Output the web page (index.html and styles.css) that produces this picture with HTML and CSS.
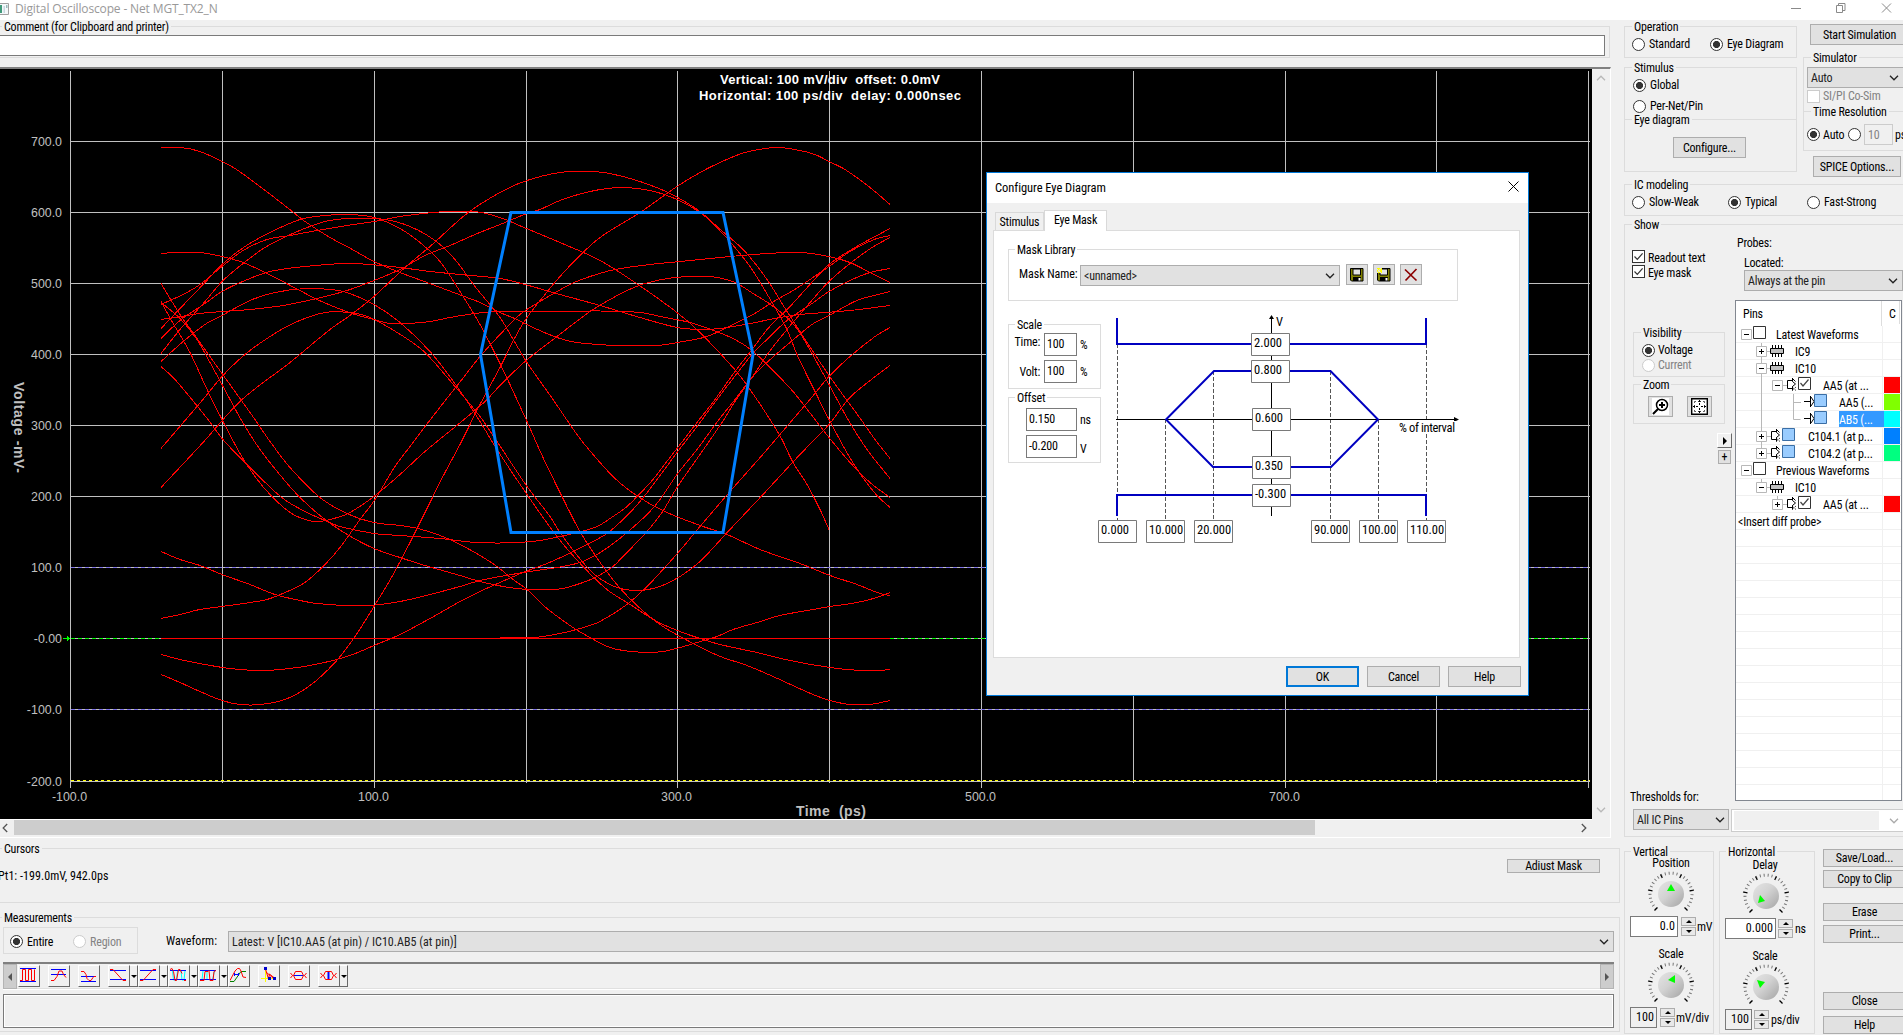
FILE: index.html
```html
<!DOCTYPE html>
<html lang="en">
<head>
<meta charset="utf-8">
<title>Digital Oscilloscope - Net MGT_TX2_N</title>
<link rel="stylesheet" href="styles.css">
</head>
<body>
<svg width="0" height="0" class="defs" aria-hidden="true">
  <symbol id="chev" viewBox="0 0 10 6"><path d="M1 .8 5 4.8 9 .8" fill="none" stroke="currentColor" stroke-width="1.3"/></symbol>
  <symbol id="tick" viewBox="0 0 11 11"><path d="M1.5 5.5 4.3 8.3 9.6 2.4" fill="none" stroke="#333" stroke-width="1.2"/></symbol>
  <symbol id="minus" viewBox="0 0 11 11"><path d="M.5.5h10v10H.5z" fill="#fff" stroke="#b8b8b8"/><path d="M3 5.5h5" stroke="#000"/></symbol>
  <symbol id="plus" viewBox="0 0 11 11"><path d="M.5.5h10v10H.5z" fill="#fff" stroke="#b8b8b8"/><path d="M3 5.5h5M5.5 3v5" stroke="#000"/></symbol>
  <symbol id="box" viewBox="0 0 13 13"><path d="M.5.5h12v12H.5z" fill="#fff" stroke="#333"/></symbol>
  <symbol id="boxon" viewBox="0 0 13 13"><path d="M.5.5h12v12H.5z" fill="#fff" stroke="#333"/><path d="M2.5 6 5 9l5.5-6.500" fill="none" stroke="#444" stroke-width="1.2"/></symbol>
  <symbol id="boxblue" viewBox="0 0 13 13"><path d="M.5.5h12v12H.5z" fill="#99ccff" stroke="#3a6ea5"/></symbol>
  <symbol id="chip" viewBox="0 0 14 12"><path d="M2.500 0v12M5.500 0v12M8.500 0v12M11.500 0v12" stroke="#000"/><path d="M.5 3.500h13v5H.5z" fill="#c0c0c0" stroke="#000"/></symbol>
  <symbol id="probe" viewBox="0 0 11 13"><path d="M7 2.500H1.500v8H6M6.500 0v3.500L9.500 6 6.500 8.500v3M6.500.5 9.500 3.500M6.500 8.500v4" fill="none" stroke="#000"/><path d="M6 9l4 3.500M6 12.500l4-3.500" stroke="#000" stroke-dasharray="1 1"/></symbol>
  <symbol id="pin" viewBox="0 0 11 13"><path d="M0 6.500h6M6.500 1v11M7 2l3 4.500-3 4.500" fill="none" stroke="#000"/></symbol>
  <symbol id="dial" viewBox="0 0 48 44">
    <path d="M9.100 38.900A21 21 0 1 1 38.900 38.900" fill="none" stroke="#777" stroke-width="3" stroke-dasharray="1 2.900"/>
    <path d="M7.500 40.500l3-3M40.500 40.500l-3-3M1 20l4.500.9M47 20l-4.500.9M13.500 4.500l1.800 3.500M34.500 4.500 32.700 8" stroke="#000" stroke-width="1.2"/>
    <circle cx="24" cy="24" r="13" fill="url(#knob)"/>
  </symbol>
  <defs>
    <linearGradient id="knob" x1="0" y1="0" x2="1" y2="1"><stop offset="0" stop-color="#e4e4e4"/><stop offset=".45" stop-color="#d2d2d2"/><stop offset="1" stop-color="#a4a4a4"/></linearGradient>
  </defs>
</svg>

<header class="titlebar">
  <svg class="appicon" viewBox="0 0 9 12"><path d="M0 .5h8.500v11H0" fill="#f4f8fa" stroke="#a0a0a0"/><path d="M0 2h2v8H0z" fill="#3f9a7a"/><path d="M3.500 3h1.500v7H3.500z" fill="#c8d8e0"/><path d="M6 2h1.500v3H6z" fill="#9bb"/></svg>
  <span class="title">Digital Oscilloscope - Net MGT_TX2_N</span>
  <svg class="winbtns" viewBox="0 0 104 12"><g fill="none" stroke="#8a8a8a"><path d="M0 6.500h10M45.500 3.500h6v7h-6zM47.500 3.500v-2h6.500v7h-2.500M91 1.500l9 9M100 1.500l-9 9"/></g></svg>
</header>

<div class="shell">
<main class="main">
  <section class="group comment"><span class="cap">Comment (for Clipboard and printer)</span><div class="field comment-input"></div></section>

  <section class="scope">
    <div class="scope-row">
      <svg class="plot" id="plot" viewBox="0 69 1592 750">
        <g class="grid">
          <path d="M70.500 71V788M222.500 71V783M374.500 71V788M526.500 71V783M677.500 71V788M829.500 71V783M981.500 71V788M1133.500 71V783M1285.500 71V788M1436.500 71V783M1588.500 71V788"/>
          <path d="M70 141.500H1590M70 212.500H1590M70 283.500H1590M70 354.500H1590M70 425.500H1590M70 496.500H1590M70 567.500H1590M70 638.500H1590M70 709.500H1590M70 781.500H1590"/>
        </g>
        <path class="blue" d="M71 567.500H1590M71 709.500H1590"/>
        <path class="green" d="M71 638.500H1590"/>
        <path class="yellow" d="M71 780.500H1590"/>
        <path d="M63 638.500h7M67.500 636v5M68.500 637v3" stroke="#00ff00" fill="none"/>
        <g id="traces" class="traces"></g>
        <path class="mask" d="M511 212.500H723L753 354.500 723 532.500H511L480.500 354.500Z"/>
        <g class="axis" text-anchor="end">
          <text x="62" y="146">700.0</text><text x="62" y="217">600.0</text><text x="62" y="288">500.0</text><text x="62" y="359">400.0</text><text x="62" y="430">300.0</text><text x="62" y="501">200.0</text><text x="62" y="572">100.0</text><text x="62" y="643">-0.00</text><text x="62" y="714">-100.0</text><text x="62" y="785.500">-200.0</text>
        </g>
        <g class="axis" text-anchor="middle">
          <text x="69.500" y="800.500">-100.0</text><text x="373.500" y="800.500">100.0</text><text x="676.500" y="800.500">300.0</text><text x="980.500" y="800.500">500.0</text><text x="1284.500" y="800.500">700.0</text>
        </g>
        <g class="bold-axis">
          <text x="796" y="815.500" textLength="70" xml:space="preserve">Time  (ps)</text>
          <text transform="translate(14 382) rotate(90)" textLength="91">Voltage -mV-</text>
        </g>
        <g class="readout">
          <text x="720" y="83.500" textLength="220" xml:space="preserve">Vertical: 100 mV/div  offset: 0.0mV</text>
          <text x="699" y="99.500" textLength="262" xml:space="preserve">Horizontal: 100 ps/div  delay: 0.000nsec</text>
        </g>
      </svg>
      <div class="vscroll"><svg class="flip"><use href="#chev"/></svg><svg><use href="#chev"/></svg></div>
    </div>
    <div class="hscroll"><svg class="arr l"><use href="#chev"/></svg><div class="thumb"></div><svg class="arr r"><use href="#chev"/></svg></div>
  </section>

  <section class="group cursors"><span class="cap">Cursors</span>
    <div class="cursor-row"><span class="pt">Pt1: -199.0mV, 942.0ps</span><span class="btn adjust">Adiust Mask</span></div>
  </section>

  <section class="group meas"><span class="cap">Measurements</span>
    <div class="meas-row">
      <div class="range"><i class="radio on"></i><span>Entire</span><i class="radio off gap"></i><span class="dim">Region</span></div>
      <span class="wf">Waveform:</span>
      <div class="select wfsel"><span>Latest: V [IC10.AA5 (at pin) / IC10.AB5 (at pin)]</span><svg><use href="#chev"/></svg></div>
    </div>
    <div class="toolbar">
      <div class="scrollend"><b class="tri-l"></b></div>
      <div class="tools">
        <span class="tool"><svg viewBox="0 0 17 17"><path class="b" d="M0 1.500h16M0 14.500h16"/><path class="r" d="M0 13.500h2.500V2.500h3v11h3V2.500h3v11h3V2.500"/></svg></span>
        <span class="tool sp"><svg viewBox="0 0 17 17"><path class="b" d="M1 2.500h15M1 7.500h15"/><path class="r" d="M1 13.500h3l3-4 2-5.500h3l1.500 3.500 2.500 3"/></svg></span>
        <span class="tool sp"><svg viewBox="0 0 17 17"><path class="b" d="M1 9.500h15M1 14.500h15"/><path class="r" d="M1 4.500h3l2 3 1 4 2 2h2l2-3 1-1h2"/></svg></span>
        <span class="tool sp"><svg viewBox="0 0 17 17"><path class="b" d="M0 3.500h16M0 12.500h16"/><path class="r" d="M0 2.500h3l10 11h3"/></svg></span><span class="drop"></span>
        <span class="tool"><svg viewBox="0 0 17 17"><path class="b" d="M0 3.500h16M0 12.500h16"/><path class="r" d="M0 13.500h3l10-11h3"/></svg></span><span class="drop"></span>
        <span class="tool"><svg viewBox="0 0 17 17"><path class="c" d="M2.500 4l1 9h3l1-9M11 4l1 9h2l1-9"/><path class="b" d="M0 3.500h16M0 12.500h16"/><path class="r" d="M0 2.500l2-1 1.500 3 1.500 9h1.500L8.500 2.500h1.500l2 4M14 13.500h2"/></svg></span><span class="drop"></span>
        <span class="tool"><svg viewBox="0 0 17 17"><path class="c" d="M3 4l-1 9M7 4v9M14.500 4l-2 9"/><path class="b" d="M0 3.500h16M0 12.500h16"/><path class="r" d="M0 13.500h4l1-9h3l1-1 1 10h3l1-9 2-1"/></svg></span><span class="drop"></span>
        <span class="tool"><svg viewBox="0 0 17 17"><path class="g" d="M0 14.500h4l7-10h5"/><path class="r" d="M0 13.500 5 4l2.500-2.500h2L11 4l2 6 3 .5"/><path class="b" d="M4 7.500h5M4.500 6v3M8.500 6v3"/></svg></span>
        <span class="tool sp"><svg viewBox="0 0 17 17"><path d="M5.500 1v14M1 11.500h14" stroke="#ff0" fill="none"/><path class="r" d="M5.500 2l3 10 1-5 5 4M6 5l7 6"/><path d="M4 0h3v3H4zM8 10h3v3H8zM13 10h3v3h-3z" fill="#00c"/></svg></span>
        <span class="tool sp"><svg viewBox="0 0 17 17"><path class="b" d="M4 8.500h9"/><path class="r" d="M.5 6l2 2.500-2 2.500M16.500 6l-2 2.500 2 2.500M2.500 8.500h1l2-4h6l2 4h1M3.500 8.500l2 4h6l2-4"/></svg></span>
        <span class="tool sp"><svg viewBox="0 0 17 17"><path d="M7.500 5h2v7h-2z" fill="#00f"/><path class="r" d="M.5 6l2 2.500-2 2.500M16.500 6l-2 2.500 2 2.500M2.500 8.500h1l2-4h6l2 4h1M3.500 8.500l2 4h6l2-4"/></svg></span><span class="drop"></span>
      </div>
      <div class="scrollend"><b class="tri-r"></b></div>
    </div>
    <div class="field result"></div>
  </section>
</main>

<aside class="side">
  <div class="side-top">
    <div class="stack-a">
      <section class="group op"><span class="cap">Operation</span>
        <div class="line"><i class="radio"></i><span class="w62">Standard</span><i class="radio on"></i><span>Eye Diagram</span></div></section>
      <section class="group stim"><span class="cap">Stimulus</span>
        <div class="line"><i class="radio on"></i><span>Global</span></div>
        <div class="line"><i class="radio"></i><span>Per-Net/Pin</span></div></section>
      <section class="group eye"><span class="cap">Eye diagram</span><span class="btn configure">Configure...</span></section>
    </div>
    <div class="stack-b">
      <span class="btn start">Start Simulation</span>
      <section class="group simu"><span class="cap">Simulator</span>
        <div class="select simsel"><span>Auto</span><svg><use href="#chev"/></svg></div>
        <div class="line cosim"><i class="check off"></i><span class="dim">SI/PI Co-Sim</span></div></section>
      <section class="group tres"><span class="cap">Time Resolution</span>
        <div class="line"><i class="radio on"></i><span class="w23">Auto</span><i class="radio"></i><span class="field ten">10</span><span>ps</span></div></section>
      <span class="btn spice">SPICE Options...</span>
    </div>
  </div>
  <section class="group icm"><span class="cap">IC modeling</span>
    <div class="line"><i class="radio"></i><span class="w80">Slow-Weak</span><i class="radio on"></i><span class="w62b">Typical</span><i class="radio"></i><span>Fast-Strong</span></div></section>
  <section class="group show"><span class="cap">Show</span>
    <div class="show-cols">
      <div class="show-left">
        <div class="line"><i class="check"><svg><use href="#tick"/></svg></i><span>Readout text</span></div>
        <div class="line"><i class="check"><svg><use href="#tick"/></svg></i><span>Eye mask</span></div>
        <section class="group vis"><span class="cap">Visibility</span>
          <div class="line"><i class="radio on"></i><span>Voltage</span></div>
          <div class="line"><i class="radio off"></i><span class="dim">Current</span></div></section>
        <section class="group zoom"><span class="cap">Zoom</span>
          <div class="zoom-row">
            <span class="btn"><svg viewBox="0 0 17 17"><path d="M0 0h17v17H0z" fill="#fff"/><circle cx="10" cy="7" r="5.500" fill="none" stroke="#000" stroke-width="1.500"/><path d="M7 7h6M10 4v6M6 11 1 16" stroke="#000" stroke-width="2"/></svg></span>
            <span class="btn"><svg viewBox="0 0 17 17"><path d="M.7.700h15.600v15.600H.7z" fill="#fff" stroke="#000" stroke-width="1.400"/><path d="M8.500 2v5M8.500 10v5M2 8.500h5M10 8.500h5" stroke="#000" stroke-dasharray="2 1"/><path d="M7 4l1.500-1.500L10 4M7 13l1.500 1.500L10 13M4 7 2.500 8.500 4 10M13 7l1.500 1.500L13 10" fill="none" stroke="#000" stroke-width=".8"/><path d="M3.500 5V3.500H5M12 3.500h1.500V5M3.500 12v1.500H5M12 13.500h1.500V12" fill="none" stroke="#333" stroke-width=".8"/></svg></span>
          </div></section>
        <span class="mini raised"><b class="tri-r"></b></span>
        <span class="mini plusb">+</span>
        <span class="thr">Thresholds for:</span>
      </div>
      <div class="show-right">
        <span class="probes">Probes:</span><span class="located">Located:</span>
        <div class="select loc"><span>Always at the pin</span><svg><use href="#chev"/></svg></div>
        <div class="tree" id="tree">
          <div class="thead"><span>Pins</span><b>C</b></div>
          <div class="row"><svg width="40"><use href="#minus" x="5" y="3" width="11" height="11"/><use href="#box" x="17" y="0" width="13" height="13"/></svg><span>Latest Waveforms</span><b></b></div>
          <div class="row"><svg width="59"><path class="tl" d="M25.500 0v17M31 8.500h3"/><use href="#plus" x="20" y="3" width="11" height="11"/><use href="#chip" x="34" y="2" width="14" height="12"/></svg><span>IC9</span><b></b></div>
          <div class="row"><svg width="59"><path class="tl" d="M25.500 0v17M31 8.500h3"/><use href="#minus" x="20" y="3" width="11" height="11"/><use href="#chip" x="34" y="2" width="14" height="12"/></svg><span>IC10</span><b></b></div>
          <div class="row"><svg width="87"><path class="tl" d="M25.500 0v17M47 8.500h4"/><use href="#minus" x="36" y="3" width="11" height="11"/><use href="#probe" x="50" y="1" width="11" height="13"/><use href="#boxon" x="62" y="0" width="13" height="13"/></svg><span>AA5 (at ...</span><b class="red"></b></div>
          <div class="row"><svg width="103"><path class="tl" d="M25.500 0v17M57.500 0v17M58 8.500h7"/><use href="#pin" x="68" y="1" width="11" height="13"/><use href="#boxblue" x="78" y="0" width="13" height="13"/></svg><span>AA5 (...</span><b class="lime"></b></div>
          <div class="row"><svg width="103"><path class="tl" d="M25.500 0v17M57.500 0v8.500h7"/><use href="#pin" x="68" y="1" width="11" height="13"/><use href="#boxblue" x="78" y="0" width="13" height="13"/></svg><span class="sel">AB5 (...</span><b class="cyan"></b></div>
          <div class="row"><svg width="72"><path class="tl" d="M25.500 0v17M31 8.500h4"/><use href="#plus" x="20" y="3" width="11" height="11"/><use href="#probe" x="34" y="1" width="11" height="13"/><use href="#boxblue" x="46" y="0" width="13" height="13"/></svg><span>C104.1 (at p...</span><b class="azure"></b></div>
          <div class="row"><svg width="72"><path class="tl" d="M25.500 0v8M31 8.500h4"/><use href="#plus" x="20" y="3" width="11" height="11"/><use href="#probe" x="34" y="1" width="11" height="13"/><use href="#boxblue" x="46" y="0" width="13" height="13"/></svg><span>C104.2 (at p...</span><b class="spring"></b></div>
          <div class="row"><svg width="40"><use href="#minus" x="5" y="3" width="11" height="11"/><use href="#box" x="17" y="0" width="13" height="13"/></svg><span>Previous Waveforms</span><b></b></div>
          <div class="row"><svg width="59"><path class="tl" d="M25.500 0v8M31 8.500h3"/><use href="#minus" x="20" y="3" width="11" height="11"/><use href="#chip" x="34" y="2" width="14" height="12"/></svg><span>IC10</span><b></b></div>
          <div class="row"><svg width="87"><path class="tl" d="M41.500 0v8M47 8.500h4"/><use href="#plus" x="36" y="3" width="11" height="11"/><use href="#probe" x="50" y="1" width="11" height="13"/><use href="#boxon" x="62" y="0" width="13" height="13"/></svg><span>AA5 (at ...</span><b class="red"></b></div>
          <div class="row"><svg width="2"></svg><span>&lt;Insert diff probe&gt;</span><b></b></div>
        </div>
      </div>
    </div>
    <div class="thr-row">
      <div class="select allpins"><span>All IC Pins</span><svg><use href="#chev"/></svg></div>
      <div class="select thrsel"><span></span><svg><use href="#chev"/></svg></div>
    </div>
  </section>

  <div class="side-bottom">
    <section class="group knobs"><span class="cap">Vertical</span>
      <span class="klabel">Position</span>
      <svg class="dial"><use href="#dial"/><path d="M24 14l4 7h-8z" fill="#0f0"/></svg>
      <div class="krow"><span class="field kin wide">0.0</span><span class="spin"><i><b class="up"></b></i><i><b class="dn"></b></i></span><span>mV</span></div>
      <span class="klabel second">Scale</span>
      <svg class="dial"><use href="#dial"/><path d="M28 14v8l-7-3z" fill="#0f0"/></svg>
      <div class="krow"><span class="field kin grey">100</span><span class="spin"><i><b class="up"></b></i><i><b class="dn"></b></i></span><span>mV/div</span></div>
    </section>
    <section class="group knobs horiz"><span class="cap">Horizontal</span>
      <span class="klabel">Delay</span>
      <svg class="dial"><use href="#dial"/><path d="M18 23l5 6-7 2z" fill="#0f0"/></svg>
      <div class="krow"><span class="field kin wide">0.000</span><span class="spin"><i><b class="up"></b></i><i><b class="dn"></b></i></span><span>ns</span></div>
      <span class="klabel second">Scale</span>
      <svg class="dial"><use href="#dial"/><path d="M15 17l8 2-5 6z" fill="#0f0"/></svg>
      <div class="krow"><span class="field kin grey">100</span><span class="spin"><i><b class="up"></b></i><i><b class="dn"></b></i></span><span>ps/div</span></div>
    </section>
    <div class="actions">
      <span class="btn">Save/Load...</span><span class="btn m3">Copy to Clip</span><span class="btn m15">Erase</span><span class="btn m4">Print...</span><span class="btn m49">Close</span><span class="btn m6">Help</span>
    </div>
  </div>
</aside>
</div>

<div class="dialog">
  <div class="dlg-title"><span>Configure Eye Diagram</span><svg viewBox="0 0 11 11"><path d="M.5.5l10 10M10.500.5l-10 10" stroke="#000" fill="none"/></svg></div>
  <div class="tabs"><span class="tab">Stimulus</span><span class="tab active">Eye Mask</span></div>
  <div class="panel">
    <section class="group lib"><span class="cap">Mask Library</span>
      <div class="lib-row"><span class="mn">Mask Name:</span>
        <div class="select"><span>&lt;unnamed&gt;</span><svg><use href="#chev"/></svg></div>
        <span class="btn ib"><svg viewBox="0 0 14 14"><path d="M.5.5h12.500v12.500H1.500l-1-1z" fill="#808000" stroke="#000"/><path d="M3 1h7.500v6H3z" fill="#e1e1e1" stroke="#000"/><path d="M3 9h8v4H3z" fill="#000"/><path d="M8.500 10h2v2.500h-2z" fill="#fff"/></svg></span>
        <span class="btn ib"><svg viewBox="0 0 14 14"><path d="M.5.5h12.500v12.500H1.500l-1-1z" fill="#808000" stroke="#000"/><path d="M3 1h7.500v6H3z" fill="#e1e1e1" stroke="#000"/><path d="M3 9h8v4H3z" fill="#000"/><path d="M8.500 10h2v2.500h-2z" fill="#fff"/><path d="M0 0h5v5H0z" fill="#ff0"/><path d="M0 1l4 4M4 0 0 5" stroke="#e1e1e1"/></svg></span>
        <span class="btn ib"><svg viewBox="0 0 14 14"><path d="M1 1.500l11.500 11M12.500 1 1.500 12.500" stroke="#8b0000" stroke-width="1.700"/></svg></span>
      </div></section>
    <div class="panel-cols">
      <div class="params">
        <section class="group scale"><span class="cap">Scale</span>
          <div class="prow"><span class="pl up3">Time:</span><span class="field p33">100</span><span>%</span></div>
          <div class="prow"><span class="pl">Volt:</span><span class="field p33">100</span><span>%</span></div></section>
        <section class="group offs"><span class="cap">Offset</span>
          <div class="prow"><span class="field p51">0.150</span><span>ns</span></div>
          <div class="prow"><span class="field p51">-0.200</span><span class="dn3">V</span></div></section>
      </div>
      <svg class="maskdia" viewBox="1096 310 370 240">
        <g class="guides"><path d="M1117.500 344V520M1165.500 419V520M1213.500 371V520M1330.500 371V520M1378.500 419V520M1426.500 344V520"/></g>
        <g stroke="#000" fill="none"><path d="M1271.500 318V516M1116 419.500H1456"/></g>
        <path d="M1269 319l2.500-4 2.500 4zM1454 417l5 2.500-5 2.500z"/>
        <g class="maskline"><path d="M1117 318V344H1426V318M1117 516V495H1426V516M1166 419.500 1214 371H1330.500L1378 419.500 1331 467H1213Z"/></g>
        <path d="M1397 421h61v13h-61z" fill="#fff"/>
        <g class="cells"><path d="M1251.500 333.500h38v22h-38zM1251.500 360.500h38v22h-38zM1252.500 408.500h38v22h-38zM1252.500 456.500h38v22h-38zM1252.500 484.500h38v22h-38zM1098.500 520.500h38v22h-38zM1146.500 520.500h38v22h-38zM1194.500 520.500h38v22h-38zM1311.500 520.500h38v22h-38zM1359.500 520.500h38v22h-38zM1407.500 520.500h38v22h-38z"/></g>
        <g class="ctext">
          <text x="1254" y="347">2.000</text><text x="1254" y="374">0.800</text><text x="1255" y="422">0.600</text><text x="1255" y="470">0.350</text><text x="1255" y="498">-0.300</text>
          <text x="1101" y="534">0.000</text><text x="1149" y="534">10.000</text><text x="1197" y="534">20.000</text><text x="1314" y="534">90.000</text><text x="1362" y="534">100.00</text><text x="1410" y="534">110.00</text>
          <text x="1276" y="326">V</text><text x="1399" y="432" textLength="56">% of interval</text>
        </g>
      </svg>
    </div>
  </div>
  <div class="dlg-btns"><span class="btn ok">OK</span><span class="btn">Cancel</span><span class="btn">Help</span></div>
</div>
<script src="script.js"></script>
</body>
</html>
```
FILE: styles.css
```css
*{box-sizing:border-box}
html,body{margin:0;height:100%;overflow:hidden}
body{width:1903px;height:1035px;background:#f0f0f0;color:#000;font:12px/14px Roboto,"Liberation Sans",sans-serif;font-stretch:75%;letter-spacing:-.2px;white-space:nowrap}
i,b{font-style:normal;font-weight:normal}
svg{display:block;flex:none}
.defs{position:absolute}
.titlebar{height:20px;background:#fff;display:flex;align-items:center;color:#999;font-family:"Open Sans",sans-serif;font-stretch:100%;font-size:12px;letter-spacing:-.14px;padding-bottom:3px}
.appicon{width:9px;height:12px;margin-right:6px}
.title{margin-right:auto}
.winbtns{width:104px;height:12px;margin:-2px 8px 0 0}
.shell{display:flex;height:1015px}
.main{width:1620px;flex:none;display:flex;flex-direction:column}
.group{border:1px solid #dcdcdc}
.cap{display:block;width:max-content;margin:-7px 0 -1px 7px;padding:0 2px;line-height:15px;background:#f0f0f0}
.main>.group{border-left:0}
.main>.group>.cap{margin-left:2px}
.field{background:#fff;border:1px solid #7a7a7a}
.btn{display:flex;align-items:center;justify-content:center;background:#e1e1e1;border:1px solid #adadad;height:21px}
.select{display:flex;align-items:center;background:#e1e1e1;border:1px solid #adadad;height:21px;padding:0 4px 0 3px;color:#222}
.select span{flex:1}
.select svg{width:10px;height:6px}
.dim{color:#838383}
.line{display:flex;align-items:center}
.radio{width:13px;height:13px;border:1px solid #333;border-radius:50%;background:#fff;margin-right:4px;flex:none}
.radio.on{background:radial-gradient(circle,#333 3.200px,#fff 3.900px)}
.radio.off{border-color:#ccc}
.check{width:13px;height:13px;border:1px solid #333;background:#fff;margin-right:3px;flex:none}
.check svg{width:11px;height:11px}
.check.off{border-color:#ccc}

.comment{width:1610px;height:32px;margin-top:6px}
.comment-input{height:21px;width:1605px;margin-top:1px;border-left:0}
.scope{width:1611px;height:771px;margin-top:9px;border-top:2px solid #808080;border-right:1px solid #fff;border-bottom:1px solid #fff}
.scope-row{display:flex;height:750px}
.plot{width:1592px;height:750px;background:#000}
.vscroll{width:18px;display:flex;flex-direction:column;justify-content:space-between;align-items:center;padding:6px 0;color:#b8b8b8}
.vscroll svg,.arr{width:10px;height:6px;stroke-width:2}
.flip{transform:rotate(180deg)}
.hscroll{height:16px;width:1592px;border-top:1px solid #fff;display:flex;align-items:center;color:#555}
.arr.l{transform:rotate(90deg);margin-right:4px}
.arr.r{transform:rotate(-90deg);margin-left:auto;margin-right:3px}
.thumb{width:1301px;height:15px;background:#cdcdcd}
.cursors{height:55px;margin-top:10px}
.cursor-row{display:flex;align-items:flex-start;justify-content:space-between;padding:3px 19px 0 0}
.pt{margin:10px 0 0 -2px;letter-spacing:.05px}
.adjust{width:93px;height:14px;line-height:15px;padding-top:1px}
.meas{height:115px;margin-top:14px}
.meas-row{display:flex;margin-top:2px;height:27px;padding-left:3px}
.range{width:135px;border:1px solid #dcdcdc;display:flex;align-items:center;padding:2px 0 0 6px}
.range .gap{margin-left:20px}
.wf{margin:7px 0 0 28px;width:62px;letter-spacing:.05px}
.wfsel{width:1386px;margin-top:4px;letter-spacing:.03px}
.toolbar{display:flex;height:28px;width:1611px;margin:8px 0 4px 3px;border-top:2px solid #808080;border-bottom:1px solid #fff}
.scrollend{width:14px;background:#cdcdcd;border:1px solid #b4b4b4;display:flex;align-items:center;justify-content:center}
.tools{flex:1;display:flex;padding-top:1px;border-bottom:1px solid #e0e0e0}
.tool{width:22px;height:22px;background:#f0f0f0;border:1px solid;border-color:#fff #696969 #696969 #fff;padding:1px}
.tool+.tool{margin-left:8px}
.tool:first-child{margin-left:1px}
.tool svg{width:17px;height:17px}
.tool path:not([fill]){fill:none}
.tool .b{stroke:#00f}.tool .r{stroke:red}.tool .c{stroke:#0ff}.tool .g{stroke:green}
.drop{width:8px;height:22px;border-top:1px solid #fff;border-right:1px solid #696969;border-bottom:1px solid #696969;background:#f0f0f0;display:flex;align-items:center;justify-content:center}
.drop::before{content:"";border:3px solid transparent;border-top:3px solid #000;border-bottom:0}
.drop+.tool.sp{margin-left:8px}
.tool+.drop{border-left:0}
.tri-l,.tri-r{border:4px solid transparent;width:0;height:0}
.tri-l{border-right-color:#555;border-left:0}
.tri-r{border-left-color:#555;border-right:0}
.result{width:1611px;height:34px;margin-left:3px;background:#f0f0f0;border:1px solid #7a7a7a;outline:1px solid #fff;outline-offset:-2px}

.grid{stroke:#c0c0c0;fill:none;shape-rendering:crispEdges}
.blue{stroke:#7d70e8;stroke-dasharray:4 3}
.green{stroke:#0f0;stroke-dasharray:4 3}
.yellow{stroke:#ff0;stroke-dasharray:3 3}
.traces{stroke:red;fill:none;stroke-width:1;shape-rendering:crispEdges}
.mask{fill:none;stroke:#0080ff;stroke-width:3}
.axis{fill:#c0c0c0;font:12.400px "Liberation Sans",sans-serif;letter-spacing:0}
.bold-axis{fill:#c0c0c0;font:bold 14px "Liberation Sans",sans-serif;letter-spacing:0}
.readout{fill:#fff;font:bold 13px "Liberation Sans",sans-serif;letter-spacing:0}

.side{width:320px;flex:none;padding-left:4px}
.side-top{display:flex;height:164px}
.stack-a{width:173px;margin-right:6px;padding-top:6px;flex:none}
.stack-b{width:120px;padding-top:4px;flex:none}
.op{height:32px}
.op .line,.icm .line{padding:3px 0 0 7px}
.w62{width:61px}.w23{width:25px}.w80{width:79px}.w62b{width:62px}
.stim{height:53px;margin-top:9px}
.stim .line{padding:3px 0 0 8px}
.stim .line+.line{padding-top:7px}
.eye{height:53px;margin-top:-1px}
.configure{width:73px;margin:10px 0 0 48px}
.start{margin-left:7px;justify-content:flex-start;padding-left:12px}
.simu{height:55px;margin-top:12px}
.simsel{margin:2px 0 0 3px;width:100px;padding-right:7px}
.cosim{padding:1px 0 0 3px}
.tres{height:40px;margin-top:-1px}
.tres .line{padding:5px 0 0 3px}
.tres .radio{margin-right:3px}
.ten{width:29px;height:21px;background:#f0f0f0;border-color:#ccc;color:#838383;padding:3px;margin-right:2px}
.spice{width:88px;margin:5px 0 0 10px}
.icm{height:32px}
.show{height:613px;margin-top:8px}
.show-cols{display:flex;height:573px}
.show-left{width:110px;padding:18px 0 0 7px;display:flex;flex-direction:column;flex:none}
.show-left>.line{height:15px;flex:none}
.show-left>.line .check{margin-top:-2px}
.vis{width:92px;height:45px;margin:52px 0 0 1px;flex:none}
.vis .line{padding:3px 0 0 8px}
.vis .line+.line{padding-top:1px}
.vis .radio{margin-right:3px}
.zoom{width:92px;height:40px;margin:7px 0 0 1px;flex:none}
.zoom-row{display:flex;gap:14px;padding:4px 0 0 14px}
.zoom-row .btn{width:25px}
.zoom-row svg{width:17px;height:17px}
.mini{width:15px;height:15px;margin:9px 0 0 85px;display:flex;align-items:center;justify-content:center;flex:none}
.mini .tri-r{border-left-color:#000}
.raised{border:1px solid;border-color:#fff #696969 #696969 #fff}
.plusb{background:#e1e1e1;border:1px solid #adadad;width:13px;height:14px;margin:2px 0 0 86px}
.thr{margin:auto 0 1px -2px}
.show-right{display:flex;flex-direction:column;width:180px;padding-top:4px}
.probes{margin-left:2px}.located{margin:6px 0 0 9px}
.loc{margin-left:9px;width:159px}
.tree{width:167px;height:501px;margin-top:9px;background:#fff;border:1px solid #828790;background-image:linear-gradient(90deg,transparent 146px,#f0f0f0 146px,#f0f0f0 147px,transparent 147px),repeating-linear-gradient(#fff 0 16px,#f0f0f0 16px 17px);background-position:0 0,0 25px;background-size:auto,100% 476px}
.thead{height:25px;background:#fff;display:flex;padding-left:7px;line-height:26px}
.thead span{width:139px;border-right:1px solid #ddd}
.thead b{padding-left:7px;width:18px;border-right:1px solid #ddd;height:23px;overflow:hidden}
.row{display:flex;height:17px;line-height:19px;border-bottom:1px solid #f0f0f0;width:164px}
.row svg{height:17px}
.row span{flex:1;height:16px}
.row b{width:16px;height:16px}
.sel{background:#3399ff;color:#fff}
.tl{stroke:#b8b8b8;fill:none}
.red{background:red}.lime{background:#80ff00}.cyan{background:#0ff}.azure{background:#0080ff}.spring{background:#00ff80}
.thr-row{display:flex;margin-top:4px;padding-left:8px}
.allpins{width:96px;padding-right:3px}
.thrsel{width:180px;height:23px;margin-left:2px;background:#fff;border-color:#ccc;color:#aaa;padding:0 11px 0 2px}
.thrsel span{height:19px;background:#f0f0f0;margin-right:10px}
.side-bottom{display:flex;margin-top:14px;align-items:flex-start}
.knobs{width:90px;height:183px;display:flex;flex-direction:column;align-items:center;flex:none}
.knobs .cap{align-self:flex-start;margin-left:6px}
.horiz{width:96px;margin-left:5px}
.klabel{line-height:14px;margin:-3px 0 0 4px}
.horiz .klabel{margin-top:-1px;margin-left:-4px}
.dial{width:48px;height:44px;margin:0 0 0 4px}
.horiz .dial{margin-left:-3px}
.krow{display:flex;align-items:center;align-self:stretch;padding-left:5px;margin-top:2px}
.klabel.second,.horiz .klabel.second{margin-top:10px}
.kin{height:21px;width:27px;text-align:right;padding:2px 2px 0 0;letter-spacing:.1px}
.kin.wide{width:48px}
.horiz .kin.wide{width:51px}
.kin.grey{background:#f0f0f0}
.spin{margin:0 1px 0 3px}
.horiz .spin{margin:0 2px}
.spin i{display:flex;width:15px;height:9px;border:1px solid #adadad;background:#e8e8e8;align-items:center;justify-content:center;margin-bottom:1px}
.up,.dn{border:3px solid transparent;width:0;height:0}
.up{border-bottom-color:#000;border-top:0}
.dn{border-top-color:#000;border-bottom:0}
.actions{margin:-2px 0 0 8px;width:85px}
.actions .btn{height:18px;padding-right:2px}
.m3{margin-top:3px}.m15{margin-top:15px}.m4{margin-top:4px}.m49{margin-top:49px}.m6{margin-top:6px}

.dialog{position:absolute;left:986px;top:172px;width:543px;height:524px;background:#f0f0f0;border:1px solid #0078d7;display:flex;flex-direction:column}
.dialog .cap{background:#fff;margin-left:6px}
.dlg-title{height:30px;background:#fff;display:flex;align-items:center;justify-content:space-between;padding:0 9px 0 8px;font-size:12.500px;letter-spacing:-.05px}
.dlg-title svg{width:11px;height:11px;margin-top:-3px}
.tabs{height:27px;display:flex;align-items:flex-end;padding-left:8px}
.tab{width:49px;height:18px;border:1px solid #d9d9d9;border-bottom:0;text-align:center;line-height:19px}
.tab.active{width:63px;height:21px;background:#fff;margin-bottom:-1px;line-height:19px;z-index:1}
.panel{width:527px;height:428px;margin-left:6px;background:#fff;border:1px solid #dcdcdc;padding:18px 0 0 14px}
.lib{width:450px;height:52px}
.lib-row{display:flex;padding:7px 0 0 10px}
.mn{width:61px;line-height:21px;letter-spacing:-.05px}
.lib-row .select{width:260px;margin:1px 1px 0 0}
.ib{width:22px;margin-left:5px}
.ib svg{width:14px;height:14px}
.panel-cols{display:flex}
.params{width:93px;margin-right:-5px;flex:none;padding-top:23px}
.scale{height:65px}
.offs{height:66px;margin-top:8px}
.prow{display:flex;align-items:center;height:23px;margin-bottom:4px}
.scale .prow:first-of-type{margin-top:1px}
.offs .prow:first-of-type{margin-top:3px}
.pl{width:35px;text-align:right;padding-right:4px}
.up3{margin-top:-6px}
.dn3{margin-top:5px}
.p33,.p51{height:23px;width:33px;padding:3px 0 0 2px;margin-right:3px}
.p51{width:51px;margin-left:17px}
.offs .prow:last-child{margin:0}
.maskdia{width:370px;height:240px;margin-top:9px}
.guides{stroke:#555;stroke-dasharray:4 2;fill:none}
.maskline{stroke:#0000c0;stroke-width:2;fill:none}
.cells{fill:#fff;stroke:#7a7a7a}
.ctext{font-size:12.500px;letter-spacing:0}
.dlg-btns{display:flex;gap:8px;justify-content:flex-end;padding:8px 7px 0 0}
.dlg-btns .btn{width:73px}
.dlg-btns .ok{border:2px solid #0078d7}
```
FILE: script.js
```js
// Sampled points (x y pairs, plot pixels) for every overlaid unit interval.
const traces = [
  "161 148 181 148 200 152 222 162 235 169 260 187 291 211 305 222 330 238 347 247 374 262 400 273 427 283 467 298 480 303 500 313 517 320 533 328 557 338 577 343 617 346 657 346 683 342 707 337 733 325 753 315 772 303 793 291 807 282 829 267 850 252 874 240 890 236",
  "161 254 175 253 200 253 222 257 243 263 267 274 300 291 317 300 352 314 374 320 390 324 407 324 430 322 450 318 475 314 500 312 560 312 600 311.5 640 313 665 318 690 323 711 330 735 340 752 351 768 366 793 392 815 420 829 438 850 463 870 483 890 498",
  "161 284 180 315 195 336 222 374 255 420 270 442 290 468 320 498 347 514 374 523 400 526 418 529 440 536 460 545 480 556 497 567 513 580 527 590 547 609 573 628 590 638 607 647 623 651 647 653 663 652 680 648 697 643 717 637 733 630 757 623 780 616 813 610 830 607 857 603 877 598 890 593",
  "161 302 172 322 190 353 208 392 222 420 240 454 255 477 270 495 290 513 305 520 317 522 330 520 348 514 374 497 400 475 425 452 458 425 485 402 500 386 525 362 557 337 590 312 610 300 625 292 645 284 675 278 710 277 735 283 753 294 772 306 792 323 804 340 829 385 848 420 867 450 890 479",
  "161 303 180 319 197 340 210 363 222 385 241 420 260 450 283 479 300 498 325 520 349 536 374 549 400 558 425 566 460 576 480 582 503 587 527 590 547 590 563 589 583 583 597 577 613 567 623 557 647 532 662 513 677 488 700 455 724 420 735 402 752 378 768 354 787 330 810 303 829 282 850 264 872 248 890 238",
  "161 367 175 380 208 420 222 439 240 458 260 478 283 499 305 512 325 521 340 527 374 534 400 536 440 539 475 543 500 543.5 517 543 540 541 573 534 597 527 613 517 627 507 640 494 653 480 663 467 677 449 697 423 715 400 735 372 752 350 768 329 790 307 810 285 829 265 855 248 875 237 890 229",
  "161 305 185 294 200 285 222 267 243 251 267 240 290 236 317 231 347 226 374 222 400 217 433 213 450 212 475 212 500 218 524 228 560 243 600 261 635 283 677 313 700 333 733 368 750 390 770 420 782 440 793 463 807 485 820 510 829 530",
  "161 320 175 318 200 314 222 312 250 310 283 306 317 299 347 291 374 281 400 270 425 256 450 246 475 235 500 225 527 214 540 210 560 201 590 192 620 188 650 191 677 200 700 213 725 234 745 252 767 280 787 312 829 376 861 420 875 440 890 459",
  "161 329 180 309 205 283 222 265 245 247 270 233 300 220 325 216 350 215 374 218 400 229 420 243 440 262 460 292 480 325 497 358 510 385 527 422 543 458 562 497 580 532 603 567 623 592 647 615 663 627 680 637 707 651 723 658 747 666 773 677 813 695 830 701 850 705 870 705 890 701",
  "161 339 180 321 205 304 222 292 245 281 270 272 305 267 345 264 370 265 400 268 430 272 460 275 500 279 525 285 560 295 600 306 640 318 677 328 700 330 720 329 750 324 780 318 800 315 850 311 890 306",
  "161 354 180 330 205 302 222 282 243 264 265 248 295 233 325 222 350 219 385 220 410 227 435 241 455 260 475 287 500 318 515 343 527 363 553 400 570 425 583 443 613 477 638 497 667 513 703 527 727 535 760 550 800 564 830 576 857 585 880 594 890 596",
  "161 362 182 343 205 325 222 316 250 301 275 293 305 289 330 290 347 293 374 305 400 323 430 352 457 387 480 422 497 450 527 495 557 537 583 567 607 590 627 603 657 622 680 632 697 638 720 645 757 653 790 661 830 668 860 671 878 671 890 670",
  "161 449 203 400 222 377 245 355 270 337 295 323 325 313 350 313 365 316 380 323 405 338 425 353 455 387 480 417 497 442 527 487 550 517 560 533 583 563 597 577 617 588 637 591 657 588 680 577 700 562 730 530 763 495 800 455 829 425 848 400 865 385 890 366",
  "161 488 203 443 241 401 290 363 330 330 350 316 374 297 405 268 430 247 467 214 500 193 527 181 560 173 590 172 610 174 640 182 670 194 700 212 717 228 735 248 752 270 772 303 787 330 797 355 815 392 829 420 848 455 862 477 877 496 890 508",
  "161 552 180 560 200 566 222 575 250 585 275 595 300 601 317 604 345 606 370 606 400 602 430 595 460 587 480 581 500 577 530 572 557 568 580 563 597 555 612 545 627 533 647 515 660 500 677 475 697 450 719 420 735 400 752 378 768 362 790 343 812 325 829 316 857 301 890 292",
  "161 619 180 615 200 610 222 607 250 603 267 600 285 593 305 583 325 565 340 548 360 520 375 500 395 467 410 447 425 427 446 400 458 385 480 357 500 335 520 315 540 302 570 285 590 277 615 270 650 265 680 262 730 257 768 254 800 253 829 257 850 263 870 273 890 283",
  "161 655 180 660 205 665 230 669 260 671 290 669 320 664 350 656 374 646 400 635 430 619 460 602 480 592 500 583 523 573 547 564 567 555 587 545 607 534 623 520 640 502 663 472 677 453 697 427 717 400 752 355 768 339 787 321 812 304 829 292 850 281 870 273 890 269",
  "161 675 180 683 200 692 222 701 240 705 260 705 285 700 310 686 335 663 355 637 374 607 392 577 410 543 425 513 445 473 460 445 480 405 500 368 515 338 527 318 545 295 560 277 580 256 600 238 640 213 677 187 700 173 720 163 745 153 775 148 795 150 815 155 829 162 845 170 870 188 890 205",
  "161 638.5 500 638.5 520 638 535 638 560 634 580 629 600 622 627 605 647 587 663 570 680 551 700 527 730 492 768 449 810 400 829 377 850 357 875 337 890 328",
  "161 638.5 890 638.5"
];

// Catmull-Rom through the samples, written out as cubic segments.
function toPath(str) {
  const n = str.split(" ").map(Number), p = [];
  for (let i = 0; i < n.length; i += 2) p.push([n[i], n[i + 1] - 0.5]);
  let d = "M" + p[0];
  for (let i = 0; i < p.length - 1; i++) {
    const a = p[i - 1] || p[i], b = p[i], c = p[i + 1], e = p[i + 2] || c, h = (c[0] - b[0]) / 3;
    const m1 = c[0] === a[0] ? 0 : (c[1] - a[1]) / (c[0] - a[0]);
    const m2 = e[0] === b[0] ? 0 : (e[1] - b[1]) / (e[0] - b[0]);
    d += `C${b[0] + h},${b[1] + m1 * h} ${c[0] - h},${c[1] - m2 * h} ${c}`;
  }
  return d;
}

const layer = document.getElementById("traces");
for (const t of traces) {
  const path = document.createElementNS("http://www.w3.org/2000/svg", "path");
  path.setAttribute("d", toPath(t));
  layer.appendChild(path);
}
```
